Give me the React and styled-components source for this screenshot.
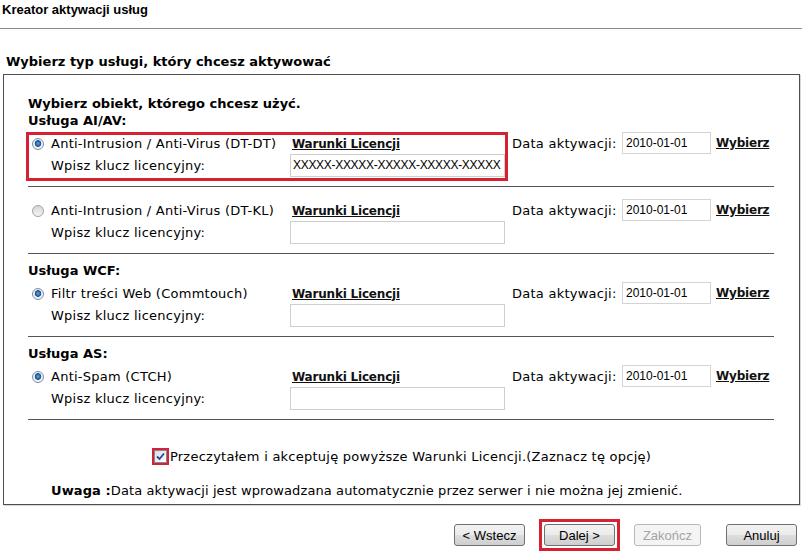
import styled, { createGlobalStyle } from 'styled-components';

const GlobalStyle = createGlobalStyle`
  body {
    margin: 0;
    background: #ffffff;
    font-family: "DejaVu Sans", Verdana, sans-serif;
    color: #000000;
  }
`;

const services = [
  { heading: 'Usługa AI/AV:', name: 'Anti-Intrusion / Anti-Virus (DT-DT)', checked: true, highlighted: true, licenseKey: 'XXXXX-XXXXX-XXXXX-XXXXX-XXXXX' },
  { name: 'Anti-Intrusion / Anti-Virus (DT-KL)', checked: false },
  { heading: 'Usługa WCF:', name: 'Filtr treści Web (Commtouch)', checked: true },
  { heading: 'Usługa AS:', name: 'Anti-Spam (CTCH)', checked: true },
];

function App() {
  return (
    <Page>
      <GlobalStyle />
      <TitleBar>Kreator aktywacji usług</TitleBar>
      <SectionTitle>Wybierz typ usługi, który chcesz aktywować</SectionTitle>
      <Panel>
        <Heading>Wybierz obiekt, którego chcesz użyć.</Heading>
        {services.map((s, i) => (
          <div key={s.name}>
            {s.heading && <Heading $spaced={i > 0}>{s.heading}</Heading>}
            <ServiceRow $first={!s.heading}>
              <LeftBlock $highlighted={s.highlighted}>
                <OptionCell>
                  <RadioMark $checked={s.checked} />
                  <span>{s.name}</span>
                </OptionCell>
                <LinkCell><TextLink>Warunki Licencji</TextLink></LinkCell>
                <KeyLabel>Wpisz klucz licencyjny:</KeyLabel>
                <KeyCell>
                  <KeyInput readOnly value={s.licenseKey || ''} />
                </KeyCell>
              </LeftBlock>
              <RightBlock>
                <DateLabel>Data aktywacji:</DateLabel>
                <DateInput readOnly value="2010-01-01" />
                <TextLink $choose>Wybierz</TextLink>
              </RightBlock>
            </ServiceRow>
            <Separator />
          </div>
        ))}
        <AcceptRow>
          <CheckFrame>
            <CheckBox>
              <svg width="9" height="9" viewBox="0 0 9 9">
                <path d="M1 4.5 L3.5 7 L8 1.5" fill="none" stroke="#21479b" strokeWidth="1.8" />
              </svg>
            </CheckBox>
          </CheckFrame>
          <span>Przeczytałem i akceptuję powyższe Warunki Licencji.(Zaznacz tę opcję)</span>
        </AcceptRow>
        <Note>
          <b>Uwaga :</b>Data aktywacji jest wprowadzana automatycznie przez serwer i nie można jej zmienić.
        </Note>
      </Panel>
      <Footer>
        <Button>&lt; Wstecz</Button>
        <FocusFrame>
          <Button>Dalej &gt;</Button>
        </FocusFrame>
        <Button disabled $narrow>Zakończ</Button>
        <Button $spaced>Anuluj</Button>
      </Footer>
    </Page>
  );
}

export default App;

const Page = styled.div`
  width: 802px;
  height: 553px;
  overflow: hidden;
`;

const TitleBar = styled.div`
  padding: 2px 0 0 2px;
  box-sizing: border-box;
  height: 29px;
  border-bottom: 1px solid #8a8a8a;
  font-family: "Liberation Sans", Arial, sans-serif;
  font-weight: bold;
  font-size: 13px;
  line-height: 16px;
`;

const SectionTitle = styled.div`
  margin: 25px 0 4px 6px;
  font-weight: bold;
  font-size: 13px;
  line-height: 16px;
`;

const Panel = styled.div`
  margin-left: 3px;
  width: 797px;
  box-sizing: border-box;
  border: 1px solid #4e4e4e;
  box-shadow: 1px 1px 0 #d8d8d8;
  padding: 20px 0 5px 24px;
  font-size: 13px;
  letter-spacing: 0.25px;
`;

const Heading = styled.div`
  font-weight: bold;
  line-height: 17px;
  letter-spacing: 0;
  margin-top: ${(p) => (p.$spaced ? '8px' : '0')};
`;

const ServiceRow = styled.div`
  display: flex;
  align-items: flex-start;
  margin-top: ${(p) => (p.$first ? '12px' : '3px')};
`;

const LeftBlock = styled.div`
  margin-left: -2px;
  width: 482px;
  box-sizing: border-box;
  border: 3px solid ${(p) => (p.$highlighted ? '#d42232' : 'transparent')};
  display: grid;
  grid-template-columns: 261px 215px;
  grid-template-rows: 17px 26px;
  align-items: center;
  line-height: 17px;
`;

const OptionCell = styled.div`
  display: flex;
  align-items: center;
  gap: 7px;
  padding-left: 3px;
  white-space: nowrap;
`;

const LinkCell = styled.div`
  padding-left: 2px;
`;

const KeyLabel = styled.div`
  padding-left: 22px;
`;

const KeyCell = styled.div`
  display: flex;
`;

const RadioMark = styled.span`
  width: 12px;
  height: 12px;
  box-sizing: border-box;
  border-radius: 50%;
  border: 1px solid ${(p) => (p.$checked ? '#7c8ea4' : '#a3a3a3')};
  background: ${(p) =>
    p.$checked
      ? 'radial-gradient(circle at 50% 45%, #6ea6d8 0, #2b6cae 2px, #1b4d86 3px, #e9eef3 3.6px, #f8f8f8 6px)'
      : 'linear-gradient(#d6d6d6, #f4f4f4)'};
  flex: none;
`;

const TextLink = styled.span`
  font-weight: bold;
  font-size: 12px;
  letter-spacing: -0.2px;
  text-decoration: underline;
  color: #111;
  margin-left: ${(p) => (p.$choose ? '5px' : '0')};
`;

const KeyInput = styled.input`
  width: 215px;
  height: 23px;
  box-sizing: border-box;
  border: 1px solid #cfcfcf;
  padding: 0 0 0 2px;
  font-family: "Liberation Sans", Arial, sans-serif;
  font-size: 12px;
  color: #000;
  outline: none;
  letter-spacing: -0.3px;
`;

const RightBlock = styled.div`
  display: flex;
  align-items: center;
  height: 22px;
  padding-left: 4px;
  white-space: nowrap;
`;

const DateLabel = styled.span`
  width: 110px;
`;

const DateInput = styled.input`
  width: 89px;
  height: 22px;
  box-sizing: border-box;
  border: 1px solid #d4d4d4;
  padding: 0 0 0 3px;
  font-family: "Liberation Sans", Arial, sans-serif;
  font-size: 12px;
  color: #000;
  outline: none;
`;

const Separator = styled.div`
  margin: 5px 25px 0 0;
  border-top: 1px solid #555555;
`;

const AcceptRow = styled.div`
  margin: 27px 24px 0 0;
  height: 18px;
  display: flex;
  align-items: center;
  justify-content: center;
  gap: 1px;
`;

const CheckFrame = styled.span`
  background: #d42232;
  padding: 2px;
  display: flex;
`;

const CheckBox = styled.span`
  width: 13px;
  height: 13px;
  box-sizing: border-box;
  border: 1px solid #7a8ba3;
  background: linear-gradient(135deg, #dcdcdc, #ffffff);
  display: flex;
  align-items: center;
  justify-content: center;
`;

const Note = styled.div`
  margin-top: 17px;
  padding-left: 23px;
  line-height: 17px;
  letter-spacing: 0.1px;
`;

const Footer = styled.div`
  margin-top: 14px;
  display: flex;
  align-items: center;
  justify-content: flex-end;
  gap: 14px;
  padding-right: 5px;
  height: 32px;
`;

const FocusFrame = styled.div`
  border: 3px solid #d42232;
  padding: 2px;
  display: flex;
`;

const Button = styled.button`
  width: ${(p) => (p.$narrow ? '67px' : '71px')};
  height: 22px;
  margin-left: ${(p) => (p.$spaced ? '11px' : '0')};
  border: 1px solid ${(p) => (p.disabled ? '#b5b9bc' : '#707070')};
  border-radius: 3px;
  background: ${(p) =>
    p.disabled
      ? '#f4f4f4'
      : 'linear-gradient(#f2f2f2 0%, #ebebeb 50%, #dddddd 51%, #cfcfcf 100%)'};
  color: ${(p) => (p.disabled ? '#a3a3a3' : '#000')};
  font-family: "Liberation Sans", Arial, sans-serif;
  font-size: 13px;
  padding: 0;
`;
